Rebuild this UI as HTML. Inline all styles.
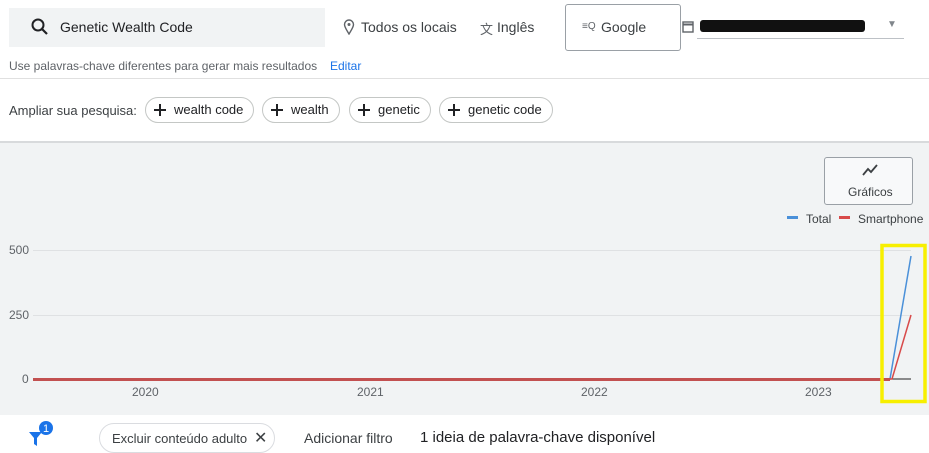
<!DOCTYPE html>
<html><head><meta charset="utf-8"><style>
body{margin:0;width:929px;height:453px;overflow:hidden;background:#fff;font-family:"Liberation Sans",sans-serif;color:#3c4043;position:relative}
.a{position:absolute;white-space:nowrap}
.chip{position:absolute;top:97px;height:24px;border:1px solid #c4c7c5;border-radius:13px;font-size:13px;line-height:24px;padding:0 10px 0 28px;color:#202124}
.chip:before{content:"";position:absolute;left:8px;top:11px;width:12px;height:2px;background:#202124}
.chip:after{content:"";position:absolute;left:13px;top:6px;width:2px;height:12px;background:#202124}
</style></head><body>
<div class="a" style="left:9px;top:8px;width:316px;height:39px;background:#f1f3f4"></div>
<svg class="a" style="left:30px;top:17px" width="20" height="20" viewBox="0 0 20 20"><circle cx="8" cy="8" r="5.5" fill="none" stroke="#202124" stroke-width="2"/><path d="M12 12l5 5" stroke="#202124" stroke-width="2.2"/></svg>
<div class="a" style="left:60px;top:19px;font-size:14px;color:#202124">Genetic Wealth Code</div>
<svg class="a" style="left:343px;top:19px" width="12" height="16" viewBox="0 0 12 16"><path d="M6 15C3 10 1.5 8 1.5 5.5a4.5 4.5 0 019 0C10.5 8 9 10 6 15z" fill="none" stroke="#5f6368" stroke-width="1.4"/><circle cx="6" cy="5.5" r="1.5" fill="#5f6368"/></svg>
<div class="a" style="left:361px;top:19px;font-size:14px">Todos os locais</div>
<div class="a" style="left:480px;top:19px;font-size:13px;color:#5f6368">文</div>
<div class="a" style="left:497px;top:19px;font-size:14px">Inglês</div>
<div class="a" style="left:565px;top:4px;width:114px;height:45px;border:1px solid #9aa0a6;border-radius:3px"></div>
<div class="a" style="left:582px;top:21px;font-size:10px;color:#5f6368">≡Q</div>
<div class="a" style="left:601px;top:19px;font-size:14px">Google</div>
<svg class="a" style="left:682px;top:20px" width="12" height="13" viewBox="0 0 12 13"><rect x="1" y="2" width="10" height="10" fill="none" stroke="#5f6368" stroke-width="1.4"/><path d="M1 4.5h10" stroke="#5f6368" stroke-width="2"/></svg>
<div class="a" style="left:700px;top:20px;width:165px;height:12px;background:#111;border-radius:3px"></div>
<div class="a" style="left:887px;top:19px;font-size:10px;color:#80868b">▼</div>
<div class="a" style="left:697px;top:38px;width:207px;height:1px;background:#bdc1c6"></div>
<div class="a" style="left:9px;top:59px;font-size:12px;color:#5f6368">Use palavras-chave diferentes para gerar mais resultados</div>
<div class="a" style="left:330px;top:59px;font-size:12px;color:#1a73e8">Editar</div>
<div class="a" style="left:0;top:78px;width:929px;height:1px;background:#e0e0e0"></div>
<div class="a" style="left:9px;top:103px;font-size:13px">Ampliar sua pesquisa:</div>
<div class="chip" style="left:145px">wealth code</div>
<div class="chip" style="left:262px">wealth</div>
<div class="chip" style="left:349px">genetic</div>
<div class="chip" style="left:439px">genetic code</div>
<div class="a" style="left:0;top:141px;width:929px;height:274px;background:#f1f3f4;border-top:2px solid #d8dadc;box-sizing:border-box"></div>
<div class="a" style="left:824px;top:157px;width:87px;height:46px;border:1px solid #9aa0a6;border-radius:3px;background:#f8f9fa"></div>
<svg class="a" style="left:862px;top:164px" width="16" height="12" viewBox="0 0 16 12"><path d="M1 11l5-6 3 3 6-7" fill="none" stroke="#3c4043" stroke-width="1.8"/></svg>
<div class="a" style="left:848px;top:185px;font-size:12px">Gráficos</div>
<div class="a" style="left:787px;top:216px;width:11px;height:3px;background:#4a90d9"></div>
<div class="a" style="left:806px;top:212px;font-size:12px">Total</div>
<div class="a" style="left:839px;top:216px;width:11px;height:3px;background:#d84a4a"></div>
<div class="a" style="left:858px;top:212px;font-size:12px">Smartphone</div>
<div class="a" style="left:9px;top:243px;font-size:12px;color:#5f6368">500</div>
<div class="a" style="left:9px;top:308px;font-size:12px;color:#5f6368">250</div>
<div class="a" style="left:22px;top:372px;font-size:12px;color:#5f6368">0</div>
<svg class="a" style="left:0;top:0" width="929" height="453">
<path d="M33 250.5H911M33 315.5H911" stroke="#dfe1e3" stroke-width="1"/>
<path d="M892 379H911" stroke="#222" stroke-width="1"/>
<path d="M33 379H890L911 256" fill="none" stroke="#4a90d9" stroke-width="1.5"/>
<path d="M33 379H892L911 315" fill="none" stroke="#d84a4a" stroke-width="1.5"/>
<path d="M33 379.5H890" stroke="#c25050" stroke-width="3"/>
<rect x="882" y="245.5" width="43" height="156" fill="none" stroke="#f7ef00" stroke-width="3.5"/>
</svg>
<div class="a" style="left:132px;top:385px;font-size:12px;color:#5f6368">2020</div>
<div class="a" style="left:357px;top:385px;font-size:12px;color:#5f6368">2021</div>
<div class="a" style="left:581px;top:385px;font-size:12px;color:#5f6368">2022</div>
<div class="a" style="left:805px;top:385px;font-size:12px;color:#5f6368">2023</div>
<svg class="a" style="left:28px;top:420px" width="28" height="28" viewBox="0 0 28 28"><path d="M1 12h13l-5 6v8l-3-2v-6z" fill="#1a73e8"/><circle cx="18" cy="8" r="7" fill="#1a73e8"/><text x="15" y="12" font-size="11" fill="#fff" font-family="Liberation Sans">1</text></svg>
<div class="a" style="left:99px;top:423px;width:176px;height:30px;border:1px solid #dadce0;border-radius:16px;box-sizing:border-box"></div>
<div class="a" style="left:112px;top:431px;font-size:13px">Excluir conteúdo adulto</div>
<div class="a" style="left:254px;top:428px;font-size:16px">✕</div>
<div class="a" style="left:304px;top:430px;font-size:14px">Adicionar filtro</div>
<div class="a" style="left:420px;top:429px;font-size:15px;color:#202124">1 ideia de palavra-chave disponível</div>
</body></html>
